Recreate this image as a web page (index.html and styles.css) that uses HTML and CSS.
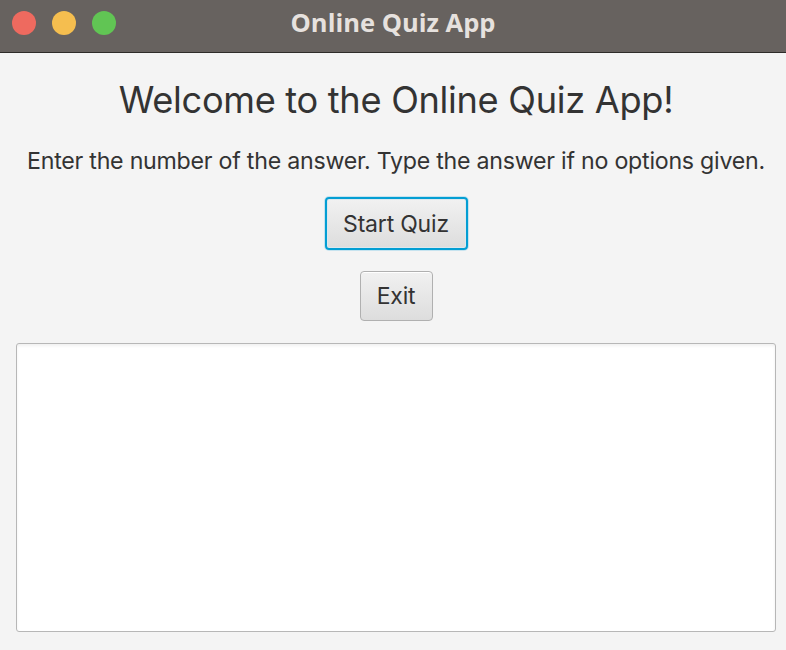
FILE: index.html
```html
<!DOCTYPE html>
<html>
<head>
<meta charset="utf-8">
<link rel="stylesheet" href="styles.css">
</head>
<body>
<div class="window">
  <div class="titlebar">
    <div class="lights">
      <span class="light red"></span>
      <span class="light yellow"></span>
      <span class="light green"></span>
    </div>
    <div class="title">Online Quiz App</div>
  </div>
  <div class="content">
    <h1 class="heading">Welcome to the Online Quiz App!</h1>
    <p class="instructions">Enter the number of the answer. Type the answer if no options given.</p>
    <button class="btn btn-focus">Start Quiz</button>
    <button class="btn btn-exit">Exit</button>
    <div class="output"></div>
  </div>
</div>
</body>
</html>
```
FILE: styles.css
```css
* { box-sizing: border-box; }
html, body { margin: 0; padding: 0; background: #f4f4f4; }
body { font-family: Inter, "Noto Sans", sans-serif; color: #333; }
.window { width: 786px; height: 650px; display: flex; flex-direction: column; background: #f4f4f4; }
.titlebar {
  height: 53px; background: #67625f; border-bottom: 1px solid #2e2b29;
  display: flex; align-items: center; justify-content: center; position: relative;
}
.lights { position: absolute; left: 12px; top: 11px; display: flex; gap: 16px; }
.light { width: 24px; height: 24px; border-radius: 50%; display: block; }
.red { background: #ee6a5f; }
.yellow { background: #f5be4f; }
.green { background: #61c554; }
.title { color: #e6e1de; font-weight: 700; font-size: 25.5px; margin-top: -8px; font-family: "Open Sans", Inter, sans-serif; }
.content { flex: 1; display: flex; flex-direction: column; align-items: center; padding: 0 10px 18px 16px; }
.heading { font-weight: 400; font-size: 36.2px; margin: 26px 0 0; line-height: 42px; color: #333; letter-spacing: -0.3px; }
.instructions { font-size: 23.2px; margin: 26px 0 0; line-height: 28px; color: #333; letter-spacing: -0.25px; }
.btn {
  font-family: inherit; font-size: 23px; color: #333; line-height: 26px;
  background: linear-gradient(#f1f1f1, #dddddd); border: 1px solid #b0b0b0; border-radius: 4px;
  padding: 11px 12px; box-shadow: inset 0 1px 0 #fff; letter-spacing: -0.2px;
}
.btn-focus {
  margin-top: 22px; border: 2px solid #039ed3; box-shadow: 0 0 0 1px #c6e3ef, inset 0 0 0 1px #dce8ee;
  width: 143px; height: 53px; padding: 0;
}
.btn-exit { margin-top: 21px; width: 73px; height: 50px; padding: 0; }
.output {
  align-self: stretch; flex: 1; margin-top: 22px; background: #fff;
  border: 1px solid #b7b7b7; border-radius: 3px; box-shadow: inset 0 2px 3px rgba(0,0,0,0.06);
}
```
